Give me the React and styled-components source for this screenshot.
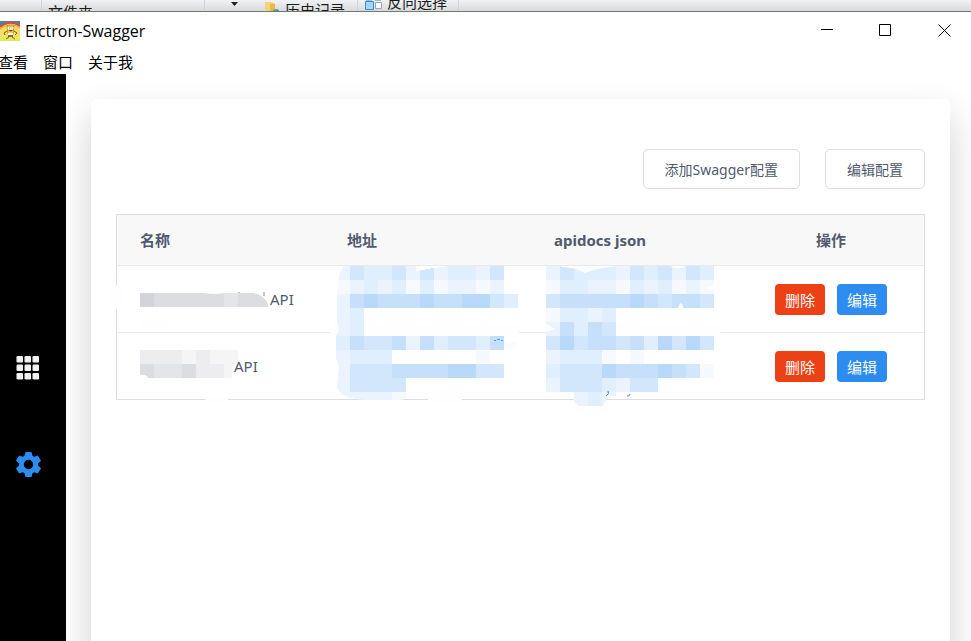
import React from "react";
import styled, { createGlobalStyle } from "styled-components";

const GlobalStyle = createGlobalStyle`
  * { box-sizing: border-box; }
  body {
    margin: 0;
    background: #fff;
    color: #515a6e;
    font-family: "Noto Sans", "Noto Sans CJK SC", sans-serif;
    font-size: 15px;
  }
  button { font-family: inherit; }
`;

const Page = styled.div`
  display: flex;
  flex-direction: column;
  height: 100vh;
  overflow: hidden;
`;

const Ribbon = styled.div`
  display: flex;
  flex: none;
  height: 12px;
  overflow: hidden;
  background: linear-gradient(#f0f2f4, #d8dadc);
  border-bottom: 1px solid #737875;
  color: #1c1c1c;
  font-size: 15px;
  line-height: 16px;
`;

const RibbonGroup = styled.div`
  display: flex;
  flex: none;
  align-items: flex-start;
  justify-content: ${(p) => p.$justify || "flex-start"};
  gap: 5px;
  width: ${(p) => p.$width}px;
  height: 30px;
  padding: 0 12px 0 6px;
  border-right: 1px solid #d0d3d6;
`;

const RibbonLabel = styled.span`
  margin-top: ${(p) => p.$top}px;
  white-space: nowrap;
`;

const RibbonIcon = styled.svg`
  flex: none;
  width: ${(p) => p.$width}px;
  height: 12px;
`;

const TitleBar = styled.header`
  display: flex;
  flex: none;
  align-items: center;
  gap: 13px;
  height: 37px;
  padding-right: 4px;
  color: #000;
`;

const Brand = styled.div`
  display: flex;
  flex: 1;
  align-items: center;
  gap: 5px;
`;

const AppLogo = styled.svg`
  flex: none;
  width: 20px;
  height: 20px;
`;

const Title = styled.h1`
  margin: 0;
  font-family: "Open Sans", "Noto Sans", sans-serif;
  font-size: 16px;
  font-weight: 400;
  line-height: 20px;
`;

const WindowButton = styled.button`
  display: flex;
  align-items: center;
  justify-content: center;
  width: 46px;
  height: 36px;
  padding: 0;
  border: 0;
  background: none;
  color: #000;
  svg { width: 13px; height: 13px; }
`;

const MenuBar = styled.nav`
  display: flex;
  flex: none;
  gap: 15px;
  height: 25px;
  margin-left: -2px;
`;

const MenuItem = styled.button`
  padding: 0;
  border: 0;
  background: none;
  color: #000;
  font-size: 15px;
  line-height: 26px;
`;

const Body = styled.div`
  display: flex;
  flex: 1;
  min-height: 0;
`;

const Sidebar = styled.nav`
  position: relative;
  z-index: 1;
  display: flex;
  flex: none;
  flex-direction: column;
  align-items: center;
  gap: 68px;
  width: 66px;
  padding: 280px 10px 0 0;
  background: #000;
`;

const SideLink = styled.a`
  display: flex;
  color: ${(p) => (p.$active ? "#2d8cf0" : "#f1f1f1")};
  svg { width: 28px; height: 28px; }
`;

const Main = styled.main`
  display: flex;
  flex: 1;
  min-width: 0;
  padding: 25px 21px 0 25px;
`;

const Card = styled.section`
  flex: 1;
  min-width: 0;
  height: 100vh;
  padding: 50px 25px;
  border-radius: 5px;
  background: #fff;
  box-shadow: 0 18px 38px rgba(0, 0, 0, 0.19);
`;

const Toolbar = styled.div`
  display: flex;
  justify-content: flex-end;
  gap: 25px;
  margin-bottom: 25px;
`;

const OutlineButton = styled.button`
  height: 40px;
  padding: 0 21px;
  border: 1px solid #dcdee2;
  border-radius: 5px;
  background: #fff;
  color: #515a6e;
  font-size: 14px;
  white-space: nowrap;
`;

const Table = styled.table`
  width: 100%;
  border: 1px solid #dcdee2;
  border-bottom-width: 0;
  border-collapse: separate;
  border-spacing: 0;
  table-layout: fixed;
`;

const HeadCell = styled.th`
  width: ${(p) => (p.$actions ? "186px" : "auto")};
  height: 51px;
  padding: 0 23px;
  border-bottom: 1px solid #e8eaec;
  background: #f8f8f9;
  font-size: 15px;
  font-weight: 700;
  line-height: 24px;
  text-align: ${(p) => (p.$actions ? "center" : "left")};
`;

const Cell = styled.td`
  position: relative;
  height: 67px;
  padding: 0 23px;
  border-bottom: 1px solid #e8eaec;
  tr:last-child > & { border-bottom-color: #dcdee2; }
`;

const NameLabel = styled.div`
  display: flex;
  align-items: center;
  gap: ${(p) => p.$gap}px;
  height: 28px;
  line-height: 28px;
`;

const NameMosaic = styled.svg`
  flex: none;
  width: ${(p) => p.$width}px;
  height: 28px;
  overflow: visible;
`;

const BlueMosaic = styled.svg`
  position: absolute;
  z-index: 1;
  top: 0;
  left: ${(p) => p.$left}px;
  width: 190px;
  height: 142px;
  overflow: visible;
  pointer-events: none;
`;

const Actions = styled.div`
  display: flex;
  justify-content: center;
  gap: 12px;
`;

const ActionButton = styled.button`
  width: 50px;
  height: 31px;
  padding: 0;
  border: 0;
  border-radius: 4px;
  background: ${(p) => (p.$danger ? "#ed4014" : "#2d8cf0")};
  color: #fff;
  font-size: 15px;
`;

const BLUES = ["", "#f6faff", "#ebf4fe", "#e0effd", "#d3e7fc", "#c6e0fb", "#b8d9fa"];
const GREYS = ["", "#f5f5f6", "#ededef", "#e4e5e9", "#dcdde1", "#d3d4d9"];

const ADDRESS_TILES = [
  "243342423324",
  "123231312212",
  "2565556556643",
  "23",
  "23",
  "354452534435",
  "233300000010",
  "244455556644",
  "24444",
  "22221",
];

const JSON_TILES = [
  "243332434243",
  "133221323121",
  "455555654554",
  "13323",
  "25354",
  "464554536464",
  "2333101",
  "344465556541",
  "24443244",
  "00232",
];

function Tiles({ rows, colors, top = 0 }) {
  return rows.flatMap((row, y) =>
    [...row].map((level, x) =>
      level === "0" ? null : (
        <rect key={`${x}-${y}`} x={x * 14} y={top + y * 14} width="14" height="14" fill={colors[level]} />
      )
    )
  );
}

function AddressMosaic() {
  return (
    <BlueMosaic $left={12} viewBox="0 0 190 142" aria-hidden="true" shapeRendering="crispEdges">
      <clipPath id="address-edge">
        <path d="M8 0H190V130H78Q68 134 62 134H28Q2 132 1 120L3 100L0 92V70Q5 64 1 57V28Q2 6 8 0Z" />
      </clipPath>
      <path d="M-5 57H183V71H-5ZM91 122H126V138H97L91 133Z" fill="#fefefe" />
      <g clipPath="url(#address-edge)">
        <Tiles rows={ADDRESS_TILES} colors={BLUES} />
      </g>
      <path d="M80 0H112Q98 2 80 5Z" fill="#fff" />
      <path d="M158 74h2M161 73h3M165 74h2" fill="none" stroke="#4b9ff2" />
      <path d="M168 76H180V84H168Z" fill="#fafcff" />
    </BlueMosaic>
  );
}

function JsonMosaic() {
  return (
    <BlueMosaic $left={15} viewBox="0 0 190 142" aria-hidden="true">
      <clipPath id="json-edge">
        <path d="M0 0H190V131H110V127L98 130H62L57 140H32L24 131H16L0 126V66L9 63L0 58Z" />
      </clipPath>
      <path d="M-1 60L175 57V71H0Z" fill="#fefefe" />
      <g clipPath="url(#json-edge)" shapeRendering="crispEdges">
        <Tiles rows={JSON_TILES} colors={BLUES} />
      </g>
      <path d="M15 0H72Q49 2 39 7Q29 1 15 1ZM124 0H140Q131 4 124 0ZM168 19L160 22L168 24ZM132 42L134 37L137 39V42Z" fill="#fff" />
      <path d="M62 125Q64 128 60 130M84 128Q83 131 81 130" fill="none" stroke="#3e83ca" />
    </BlueMosaic>
  );
}

function LongNameMosaic() {
  return (
    <NameMosaic $width={128} viewBox="0 0 128 28" aria-hidden="true">
      <clipPath id="name-edge">
        <path d="M0 8H64Q74 10 84 8H111Q123 9 128 19V22H0Z" />
      </clipPath>
      <path d="M-31 4L-15 -3V22Q-22 27 -31 22ZM0 36H28V42H0Z" fill="#fefefe" />
      <g clipPath="url(#name-edge)">
        <Tiles rows={["5444444354"]} colors={GREYS} top={8} />
        <rect x="84" y="8" width="14" height="14" fill={GREYS[3]} />
        <rect x="98" y="8" width="30" height="14" fill={GREYS[4]} />
      </g>
      <path d="M99 7v1M124 7v4" stroke="#858b9a" />
    </NameMosaic>
  );
}

function ShortNameMosaic() {
  return (
    <NameMosaic $width={94} viewBox="0 0 94 28" aria-hidden="true">
      <path d="M64 46H88V50L80 52H70Z" fill="#fefefe" />
      <Tiles rows={["2221211", "4334221"]} colors={GREYS} top={-2} />
      <path d="M0 23H5L8 25V27H0ZM92 12V28H98V12Z" fill="#fff" />
    </NameMosaic>
  );
}

function Logo() {
  return (
    <AppLogo viewBox="0 0 20 20" aria-hidden="true">
      <rect width="20" height="20" fill="#f8dc67" />
      <path d="M0 0H20V4Q10-1 0 5Z" fill="#4e82aa" />
      <path d="M0 6Q10-2 20 5" fill="none" stroke="#d84d38" strokeWidth="2" />
      <path d="M0 8Q10 0 20 7" fill="none" stroke="#efa43b" strokeWidth="1" />
      <path d="M0 15Q10 12 20 15V20H0Z" fill="#e5e95d" />
      <path d="M7 5H14L13 13H8Z" fill="#f3dc36" stroke="#8b7933" strokeWidth=".7" />
      <circle cx="9" cy="7" r="1.5" fill="#fff" />
      <circle cx="12" cy="7" r="1.5" fill="#fff" />
      <path d="M9 7h.7M11.5 7h.7" stroke="#286476" />
      <path d="M8.5 9Q10.5 12 13 9Z" fill="#9d3d29" />
      <path d="M8 12H13V14H8Z" fill="#fff" />
      <path d="M8 14H13V16H8Z" fill="#9a632f" />
      <path d="M7 10L4 12L5 14M14 10L17 12L15 14M9 16L6 18M12 16L15 18" fill="none" stroke="#895c2c" />
    </AppLogo>
  );
}

function AppsIcon() {
  return (
    <svg viewBox="0 0 28 28" fill="currentColor" aria-hidden="true">
      {[2, 10.5, 19].flatMap((y) =>
        [2.5, 10.5, 18.5].map((x) => (
          <rect key={`${x}-${y}`} x={x} y={y} width="6.5" height="6.5" rx="1.2" />
        ))
      )}
    </svg>
  );
}

function SettingsIcon() {
  return (
    <svg viewBox="-14.5 -14.5 28 28" fill="currentColor" aria-hidden="true">
      <path
        fillRule="evenodd"
        d="M-3-12.5H3L4-8.7L5.8-7.7L9.4-8.9L12.5-3.7L9.5-1V1L12.5 3.7L9.4 8.9L5.8 7.7L4 8.7L3 12.5H-3L-4 8.7L-5.8 7.7L-9.4 8.9L-12.5 3.7L-9.5 1V-1L-12.5-3.7L-9.4-8.9L-5.8-7.7L-4-8.7ZM0-4.7A4.7 4.7 0 1 0 0 4.7A4.7 4.7 0 1 0 0-4.7Z"
      />
    </svg>
  );
}

function RowActions() {
  return (
    <Actions>
      <ActionButton type="button" $danger>删除</ActionButton>
      <ActionButton type="button">编辑</ActionButton>
    </Actions>
  );
}

export default function App() {
  return (
    <Page>
      <GlobalStyle />
      <Ribbon>
        <RibbonGroup $width={42} />
        <RibbonGroup $width={163}>
          <RibbonLabel $top={4}>文件夹</RibbonLabel>
        </RibbonGroup>
        <RibbonGroup $width={153} $justify="flex-end">
          <RibbonIcon $width={66} viewBox="0 0 66 12" aria-hidden="true">
            <path d="M17 2h7l-3.500 4Z" fill="#222" />
            <path d="M51 2h7l3 2v8H51Z" fill="#f5d477" />
            <path d="M56 4h5v8h-5Z" fill="#e6b94b" />
            <path d="M58 12q3-5 7-2v2Z" fill="#639b72" />
          </RibbonIcon>
          <RibbonLabel $top={2}>历史记录</RibbonLabel>
        </RibbonGroup>
        <RibbonGroup $width={101}>
          <RibbonIcon $width={18} viewBox="0 0 18 12" aria-hidden="true">
            <path d="M1.500 1.500h8v8h-8Z" fill="#a9d5f5" stroke="#378ec9" />
            <path d="M11.500 2.500h6v6h-6Z" fill="#fff" stroke="#87a8ca" />
            <path d="M2 0h6M11 0h6" stroke="#378ec9" />
          </RibbonIcon>
          <RibbonLabel $top={-6}>反向选择</RibbonLabel>
        </RibbonGroup>
      </Ribbon>

      <TitleBar>
        <Brand>
          <Logo />
          <Title>Elctron-Swagger</Title>
        </Brand>
        <WindowButton type="button" aria-label="Minimize">
          <svg viewBox="0 0 13 13"><path d="M1 5.500H13" stroke="currentColor" /></svg>
        </WindowButton>
        <WindowButton type="button" aria-label="Maximize">
          <svg viewBox="0 0 13 13"><path d="M.5.5H11.500V11.500H.5Z" fill="none" stroke="currentColor" /></svg>
        </WindowButton>
        <WindowButton type="button" aria-label="Close">
          <svg viewBox="0 0 13 13"><path d="M.5.5L12.500 12.500M12.500.5L.5 12.500" stroke="currentColor" /></svg>
        </WindowButton>
      </TitleBar>

      <MenuBar>
        <MenuItem type="button">查看</MenuItem>
        <MenuItem type="button">窗口</MenuItem>
        <MenuItem type="button">关于我</MenuItem>
      </MenuBar>

      <Body>
        <Sidebar>
          <SideLink href="#apps" aria-label="Apps"><AppsIcon /></SideLink>
          <SideLink href="#settings" aria-label="Settings" $active><SettingsIcon /></SideLink>
        </Sidebar>
        <Main>
          <Card>
            <Toolbar>
              <OutlineButton type="button">添加Swagger配置</OutlineButton>
              <OutlineButton type="button">编辑配置</OutlineButton>
            </Toolbar>
            <Table>
              <thead>
                <tr>
                  <HeadCell scope="col">名称</HeadCell>
                  <HeadCell scope="col">地址</HeadCell>
                  <HeadCell scope="col">apidocs json</HeadCell>
                  <HeadCell scope="col" $actions>操作</HeadCell>
                </tr>
              </thead>
              <tbody>
                <tr>
                  <Cell><NameLabel $gap={2}><LongNameMosaic />API</NameLabel></Cell>
                  <Cell><AddressMosaic /></Cell>
                  <Cell><JsonMosaic /></Cell>
                  <Cell><RowActions /></Cell>
                </tr>
                <tr>
                  <Cell><NameLabel $gap={0}><ShortNameMosaic />API</NameLabel></Cell>
                  <Cell />
                  <Cell />
                  <Cell><RowActions /></Cell>
                </tr>
              </tbody>
            </Table>
          </Card>
        </Main>
      </Body>
    </Page>
  );
}
